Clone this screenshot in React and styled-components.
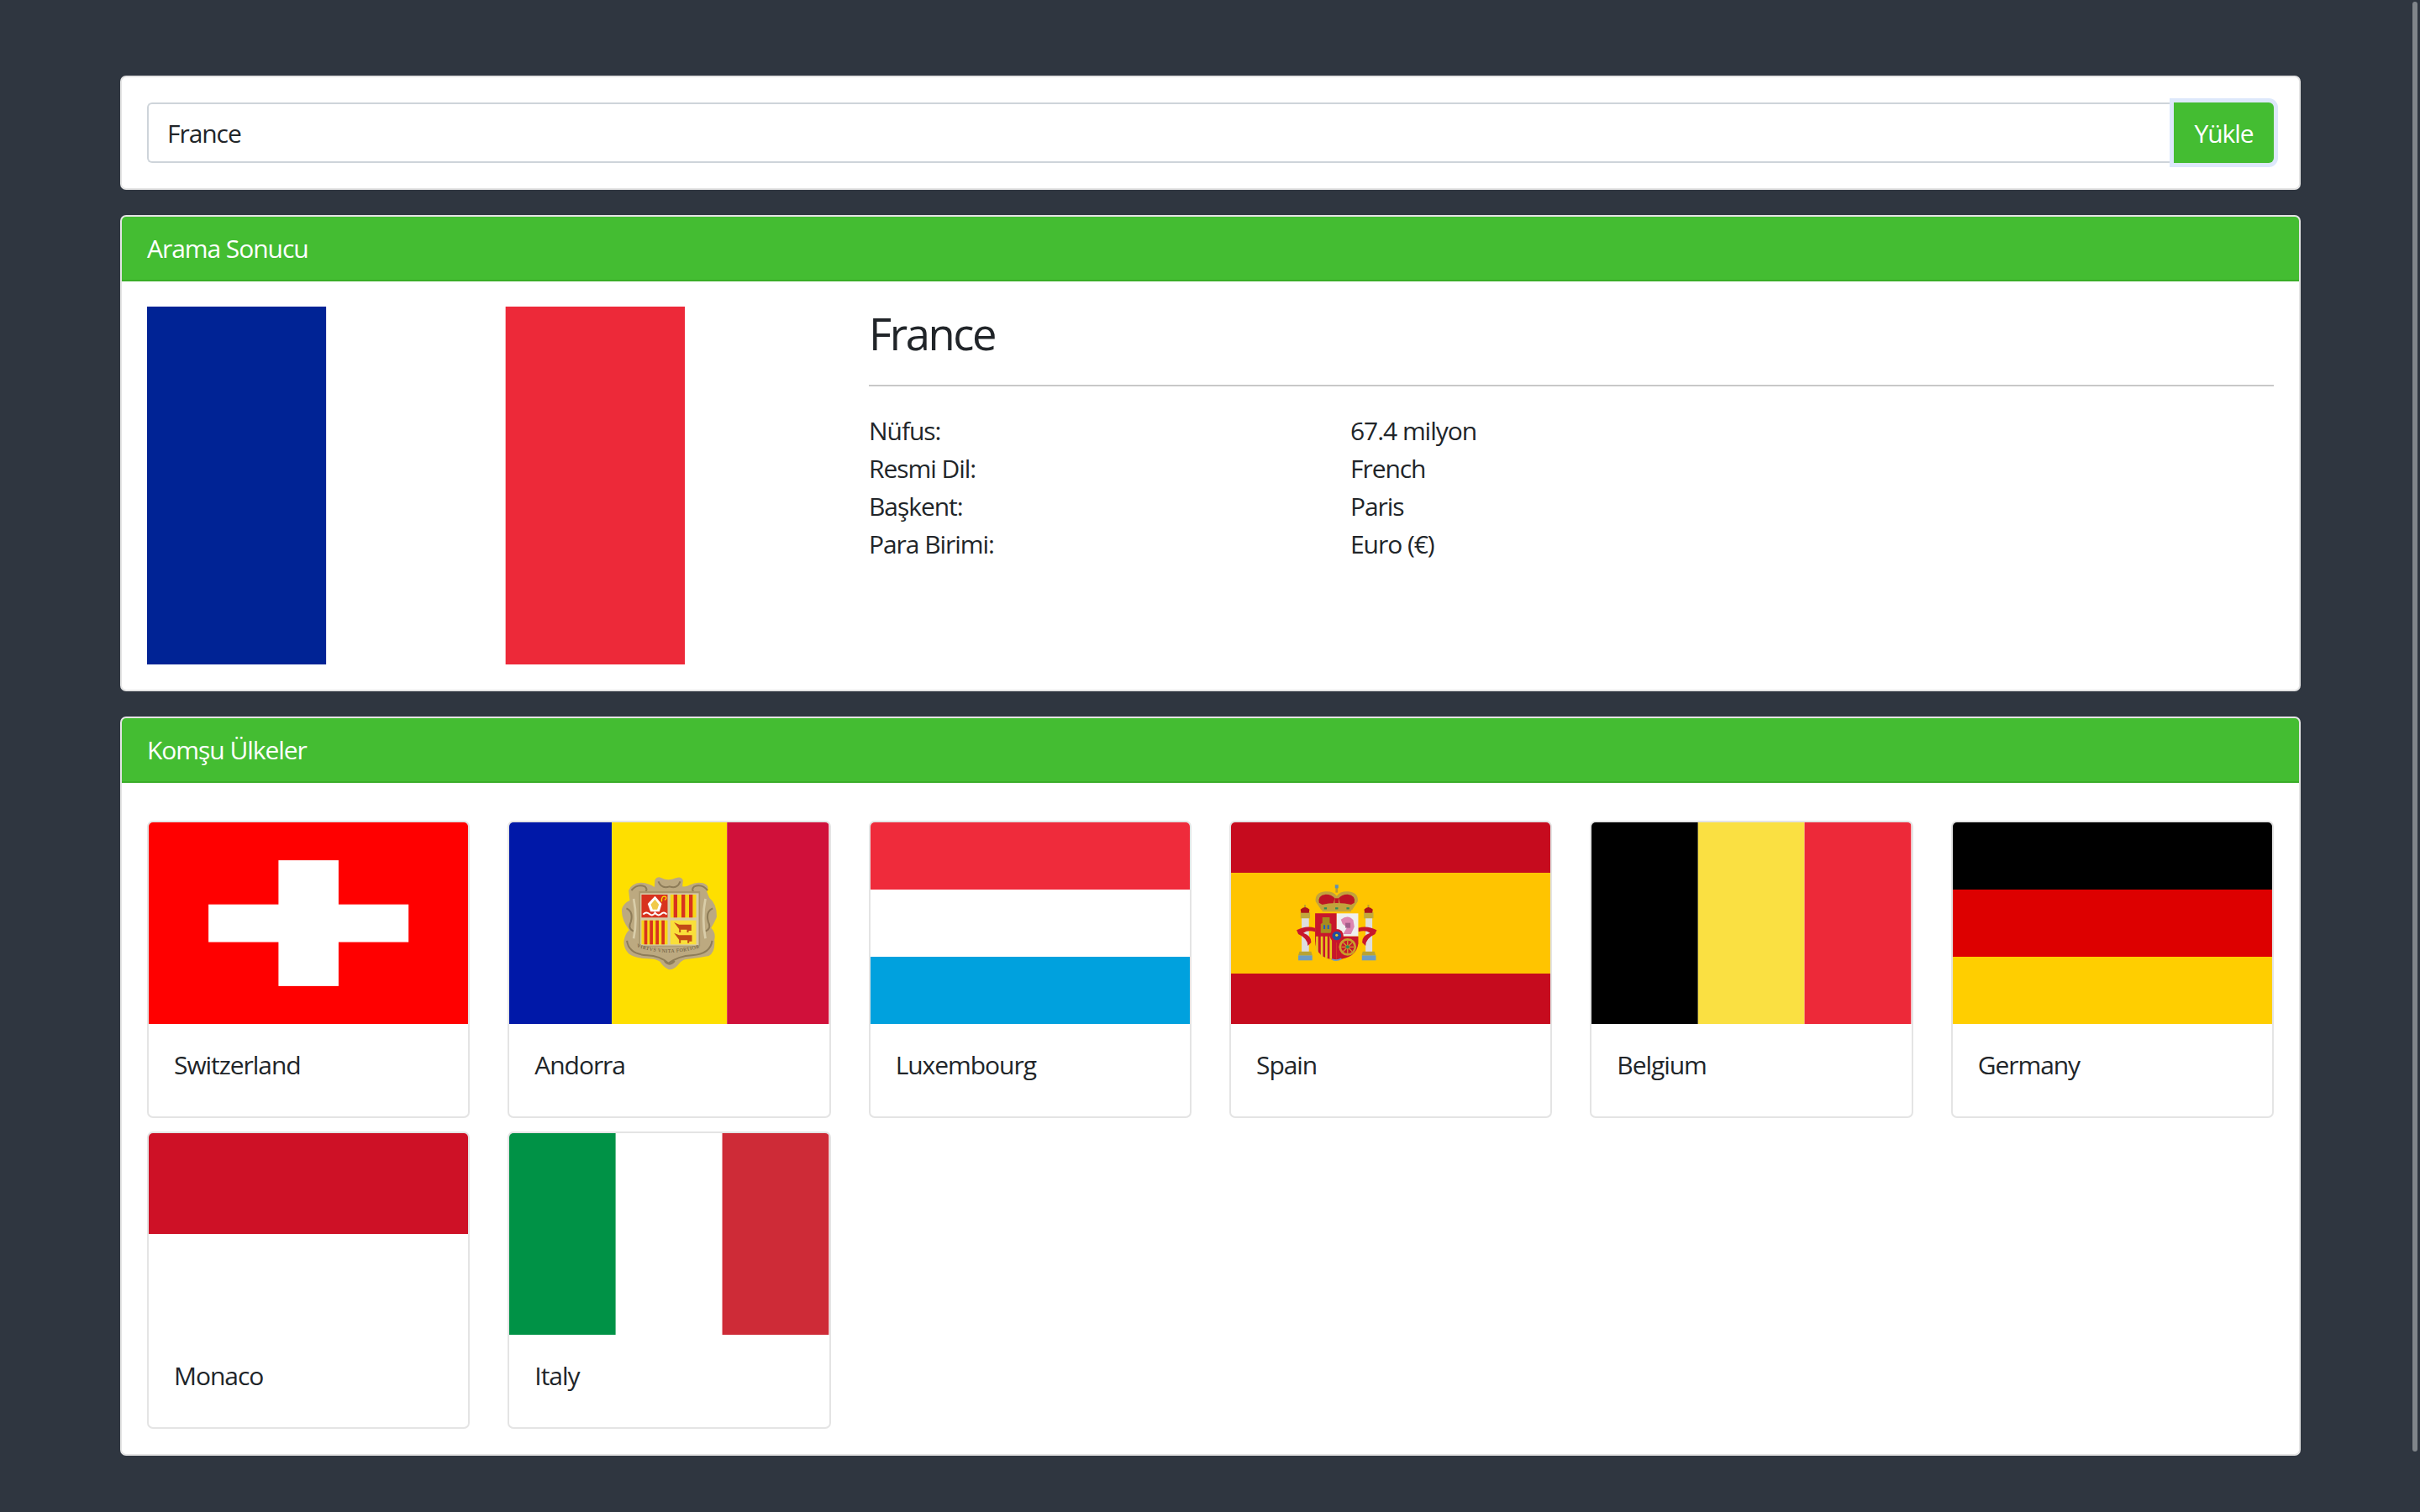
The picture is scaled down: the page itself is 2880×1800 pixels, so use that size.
import React from "react"
import styled, { createGlobalStyle } from "styled-components"

const GlobalStyle = createGlobalStyle`
  html, body {
    margin: 0;
    padding: 0;
    height: 100%;
    overflow: hidden;
    background: #2f3640;
  }
  body {
    font-family: "Open Sans", "Noto Sans", sans-serif;
    font-size: 30px;
    line-height: 45px;
    color: #212529;
    letter-spacing: -1.05px;
  }
  * {
    box-sizing: border-box;
  }
`

const Page = styled.div`
  display: flex;
  flex-direction: column;
  gap: 30px;
  padding: 90px 142px 0 143px;
`

const Card = styled.section`
  background: #fff;
  border: 2px solid #e4e4e4;
  border-radius: 7px;
`

const CardHeader = styled.header`
  background: #44bd32;
  border-bottom: 2px solid #3aad28;
  border-radius: 5px 5px 0 0;
  color: #fff;
  padding: 15px 30px;
`

const CardBody = styled.div`
  padding: 30px;
`

const SearchForm = styled.form`
  display: flex;
`

const SearchInput = styled.input`
  flex: 1;
  min-width: 0;
  height: 72px;
  padding: 0 22px;
  border: 2px solid #ced4da;
  border-right: 0;
  border-radius: 6px 0 0 6px;
  font: inherit;
  letter-spacing: inherit;
  color: #212529;
  outline: none;
`

const LoadButton = styled.button`
  width: 119px;
  height: 72px;
  padding: 0;
  border: 0;
  border-radius: 0 6px 6px 0;
  background: #44bd32;
  box-shadow: 0 0 0 5px #dde8fb;
  color: #fff;
  font: inherit;
  letter-spacing: inherit;
  position: relative;
`

const ResultBody = styled(CardBody)`
  display: flex;
`

const FlagColumn = styled.div`
  flex: 0 0 859px;
`

const LargeFlag = styled.svg`
  display: block;
  width: 640px;
  height: 426px;
`

const InfoColumn = styled.div`
  flex: 1;
  min-width: 0;
`

const CountryName = styled.h3`
  margin: 0;
  font-size: 52.5px;
  line-height: 63px;
  font-weight: 400;
  letter-spacing: -2.4px;
`

const Divider = styled.hr`
  margin: 30px 0;
  border: 0;
  border-top: 2px solid #c8c8c8;
`

const InfoGrid = styled.dl`
  display: grid;
  grid-template-columns: 573px 1fr;
  margin: 0;
`

const InfoLabel = styled.dt`
  font-weight: 400;
`

const InfoValue = styled.dd`
  margin: 0;
`

const NeighbourGrid = styled.div`
  display: grid;
  grid-template-columns: repeat(6, 1fr);
  column-gap: 45px;
  row-gap: 16px;
  padding-top: 15px;
`

const NeighbourCard = styled.article`
  height: 354px;
  border: 2px solid #e4e4e4;
  border-radius: 7px;
  overflow: hidden;
`

const NeighbourFlag = styled.svg`
  display: block;
  width: 100%;
  height: 240px;
`

const NeighbourName = styled.div`
  padding: 26px 30px;
`

const ScrollThumb = styled.div`
  position: fixed;
  top: 2px;
  right: 3px;
  width: 6px;
  height: 1726px;
  border-radius: 3px;
  background: #80858a;
`

const stripes = (colors, vertical) =>
  colors.map((color, i) => {
    const size = 100 / colors.length
    return vertical ? (
      <rect key={i} x={i * size} y="0" width={size} height="100" fill={color} />
    ) : (
      <rect key={i} x="0" y={i * size} width="100" height={size} fill={color} />
    )
  })

const Swiss = () => (
  <>
    <rect width="100" height="100" fill="#ff0000" />
    <rect x="18.7" y="40.7" width="62.6" height="18.7" fill="#fff" />
    <rect x="40.6" y="18.8" width="18.8" height="62.4" fill="#fff" />
  </>
)

// drawn in crop pixels at 3x, then scaled down onto the 380x240 flag
const AndorraArms = () => (
  <g transform="translate(74 31) scale(0.3333)">
    <path
      d="M298 112Q306 98 322 106Q345 118 372 106Q392 98 398 114L396 136Q412 138 424 130Q446 118 470 124Q496 134 482 152L492 176Q520 200 518 246Q508 270 498 284Q516 300 510 326Q514 370 490 384Q450 392 410 396Q394 398 384 412Q366 436 346 432Q328 424 316 404Q300 394 270 394Q226 392 204 376Q180 350 190 318Q196 300 206 292Q176 250 180 216Q186 196 208 186L204 150Q214 124 248 122Q278 124 296 138Z"
      fill="#bca980"
    />
    <path
      d="M214 150Q234 126 262 136Q276 150 258 160M486 150Q466 126 438 136Q424 150 442 160M196 214Q222 226 212 262Q200 286 222 296M504 214Q478 226 488 262Q500 286 478 296M310 118Q322 146 350 136Q378 146 388 118M198 330Q204 378 270 382Q316 384 346 410Q384 384 430 382Q496 378 502 330M332 402Q348 424 368 402"
      fill="none"
      stroke="#8d7c58"
      strokeWidth="6"
    />
    <path d="M222 180Q236 250 222 322M478 180Q464 250 478 322" fill="none" stroke="#d9cda9" strokeWidth="8" />
    <rect x="241" y="153" width="218" height="197" fill="#a8966d" />
    <rect x="246" y="160" width="208" height="187" fill="#d6caa6" />
    <rect x="250" y="165" width="93" height="82" fill="#d8321e" />
    <path d="M298 170L322 198L314 226H282L272 198Z" fill="#fff" />
    <path d="M298 182L312 200L306 218H290L283 200Z" fill="#f1c94a" />
    <path d="M256 236Q266 224 278 234Q290 244 298 230Q308 244 320 234Q330 224 340 236" fill="none" stroke="#fff" strokeWidth="6" />
    <path d="M322 190Q320 168 336 172Q342 180 332 184" fill="none" stroke="#fedf00" strokeWidth="4" />
    <rect x="353" y="165" width="92" height="82" fill="#f7d516" />
    <path d="M371 165V247M399 165V247M426 165V247" stroke="#d8321e" strokeWidth="13" />
    <rect x="250" y="257" width="93" height="86" fill="#f7d516" />
    <path d="M265 257V343M285 257V343M306 257V343M327 257V343" stroke="#d8321e" strokeWidth="11" />
    <rect x="353" y="257" width="92" height="86" fill="#f9df3a" />
    <path d="M366 264L384 272H428V294H418V300H412V290H390V300H384V288Z" fill="#c24a17" />
    <path d="M366 302L384 310H430V332H420V338H414V328H390V338H384V326Z" fill="#c24a17" />
    <path id="andorra-motto" d="M232 352Q350 392 465 352" fill="none" />
    <text fontFamily="Liberation Serif, serif" fontSize="18" fill="#5f4f33">
      <textPath href="#andorra-motto" textLength="228">
        VIRTVS VNITA FORTIOR
      </textPath>
    </text>
  </g>
)

const SpainArms = () => (
  <g transform="translate(34 41) scale(0.3333)">
    <path d="M150 218H176V340H150Z" fill="#dedede" />
    <path d="M378 218H402V340H378Z" fill="#dedede" />
    <path d="M146 198H180V220H146ZM372 198H406V220H372Z" fill="#c2a93c" />
    <path d="M146 188Q162 172 178 188L176 200H148ZM373 188Q388 172 404 188L402 200H375Z" fill="#ad1519" />
    <path d="M162 180V172M388 180V172" stroke="#b89b30" strokeWidth="6" />
    <path d="M142 338H184L188 352H138ZM368 338H410L414 352H364Z" fill="#b9a334" />
    <rect x="138" y="352" width="50" height="18" fill="#6d9cc4" />
    <rect x="365" y="352" width="50" height="18" fill="#6d9cc4" />
    <path d="M132 262Q165 244 198 254V268Q172 260 156 272Q186 282 184 306L172 318Q172 292 138 276Z" fill="#c8162c" />
    <path d="M418 262Q385 244 352 254V268Q378 260 394 272Q364 282 366 306L378 318Q378 292 412 276Z" fill="#c8162c" />
    <path d="M200 160Q196 128 234 124Q262 122 275 140Q288 122 316 124Q354 128 350 160L330 190H220Z" fill="#c2a23c" />
    <path d="M212 164Q206 138 236 134Q258 134 268 148L262 172H225ZM338 164Q344 138 314 134Q292 134 282 148L288 172H325Z" fill="#bd1524" />
    <path d="M268 148H282V172H268Z" fill="#bd1524" />
    <path d="M275 128V108" stroke="#b89b30" strokeWidth="8" />
    <rect x="269" y="100" width="12" height="12" fill="#5c8fb5" />
    <path d="M218 172Q275 158 332 172L326 196H224Z" fill="#c2a23c" />
    <path d="M230 184H240M270 184H280M310 184H320" stroke="#2e8b57" strokeWidth="7" />
    <path d="M198 202H275V368Q200 366 198 300Z" fill="#c8162c" />
    <path d="M275 202H352V284H275Z" fill="#efefef" />
    <path d="M275 284H352V310Q346 362 275 368Z" fill="#c8162c" />
    <path d="M205 284V340M222 284V356M238 284V362M254 284V365" stroke="#e8c820" strokeWidth="8" />
    <path d="M218 272V240L224 236V216H250V236L256 240V272Z" fill="#a88a1e" />
    <path d="M228 244H234V258H228ZM242 244H248V258H242Z" fill="#1f5fc0" />
    <path d="M290 224Q316 204 334 226L338 250L326 276H298L312 252L296 240Z" fill="#dd85b0" />
    <path d="M306 236H324V254H306Z" fill="#a35c8a" />
    <circle cx="314" cy="322" r="31" fill="#c8a02a" />
    <circle cx="314" cy="322" r="23" fill="#c8162c" />
    <path d="M292 322H336M314 300V344M298 306L330 338M330 306L298 338" stroke="#c8a02a" strokeWidth="4" />
    <circle cx="314" cy="322" r="6" fill="#2e8b57" />
    <circle cx="275" cy="282" r="24" fill="#c8162c" />
    <circle cx="275" cy="282" r="16" fill="#1f4fa0" />
    <circle cx="275" cy="280" r="5" fill="#e8c820" />
    <path d="M258 366Q275 374 292 364" stroke="#6d9cc4" strokeWidth="5" fill="none" />
  </g>
)

const Flag = ({ colors, vertical, children }) => (
  <NeighbourFlag viewBox="0 0 100 100" preserveAspectRatio="none">
    {children || stripes(colors, vertical)}
  </NeighbourFlag>
)

const ArmsFlag = ({ children }) => (
  <NeighbourFlag viewBox="0 0 380 240" preserveAspectRatio="none">
    {children}
  </NeighbourFlag>
)

const neighbours = [
  {
    name: "Switzerland",
    flag: (
      <Flag>
        <Swiss />
      </Flag>
    ),
  },
  {
    name: "Andorra",
    flag: (
      <ArmsFlag>
        <rect width="122" height="240" fill="#0018a8" />
        <rect x="122" width="137" height="240" fill="#fedf00" />
        <rect x="259" width="121" height="240" fill="#d0103a" />
        <AndorraArms />
      </ArmsFlag>
    ),
  },
  { name: "Luxembourg", flag: <Flag colors={["#ef2b3b", "#fff", "#00a1de"]} /> },
  {
    name: "Spain",
    flag: (
      <ArmsFlag>
        <rect width="380" height="240" fill="#c60b1e" />
        <rect y="60" width="380" height="120" fill="#ffc400" />
        <SpainArms />
      </ArmsFlag>
    ),
  },
  { name: "Belgium", flag: <Flag vertical colors={["#000", "#fae042", "#ed2939"]} /> },
  { name: "Germany", flag: <Flag colors={["#000", "#dd0000", "#ffce00"]} /> },
  { name: "Monaco", flag: <Flag colors={["#ce1126", "#fff"]} /> },
  { name: "Italy", flag: <Flag vertical colors={["#009246", "#fff", "#ce2b37"]} /> },
]

const info = [
  ["Nüfus:", "67.4 milyon"],
  ["Resmi Dil:", "French"],
  ["Başkent:", "Paris"],
  ["Para Birimi:", "Euro (€)"],
]

const App = () => (
  <>
    <GlobalStyle />
    <Page>
      <Card>
        <CardBody>
          <SearchForm onSubmit={e => e.preventDefault()}>
            <SearchInput defaultValue="France" />
            <LoadButton type="submit">Yükle</LoadButton>
          </SearchForm>
        </CardBody>
      </Card>

      <Card>
        <CardHeader>Arama Sonucu</CardHeader>
        <ResultBody>
          <FlagColumn>
            <LargeFlag viewBox="0 0 100 100" preserveAspectRatio="none">
              {stripes(["#002395", "#fff", "#ed2939"], true)}
            </LargeFlag>
          </FlagColumn>
          <InfoColumn>
            <CountryName>France</CountryName>
            <Divider />
            <InfoGrid>
              {info.map(([label, value]) => (
                <React.Fragment key={label}>
                  <InfoLabel>{label}</InfoLabel>
                  <InfoValue>{value}</InfoValue>
                </React.Fragment>
              ))}
            </InfoGrid>
          </InfoColumn>
        </ResultBody>
      </Card>

      <Card>
        <CardHeader>Komşu Ülkeler</CardHeader>
        <CardBody>
          <NeighbourGrid>
            {neighbours.map(item => (
              <NeighbourCard key={item.name}>
                {item.flag}
                <NeighbourName>{item.name}</NeighbourName>
              </NeighbourCard>
            ))}
          </NeighbourGrid>
        </CardBody>
      </Card>
    </Page>
    <ScrollThumb />
  </>
)

export default App
